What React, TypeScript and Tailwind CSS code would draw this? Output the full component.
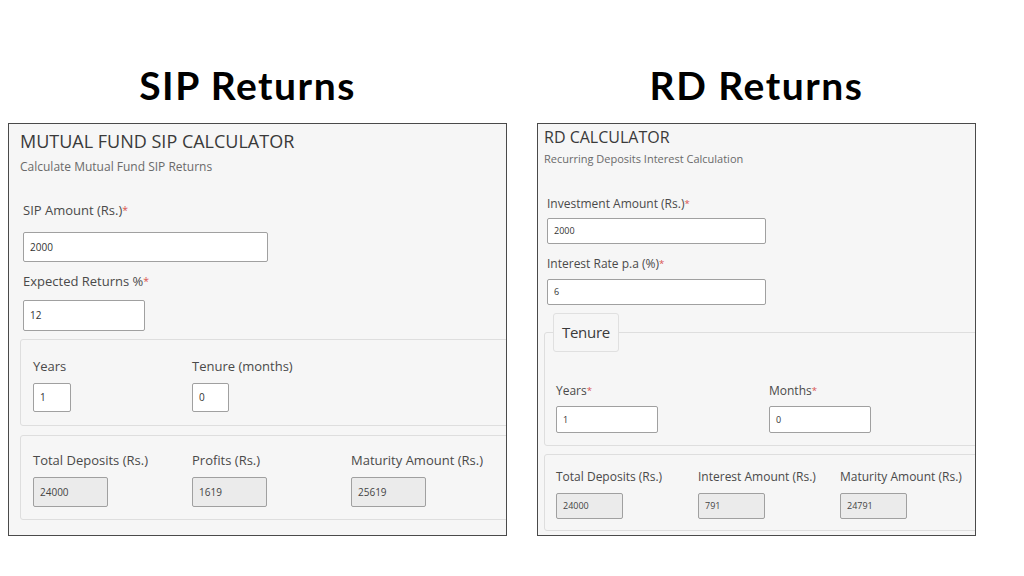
import React from 'react';

const sans = "font-['Open_Sans','Liberation_Sans',sans-serif]";

const Req = () => <span className="text-[#d9534f] text-[0.8em] align-top">*</span>;

const Field = ({ value, className }: { value: string; className: string }) => (
  <div className={`flex items-center bg-white border border-[#a0a0a0] rounded-[2px] text-[#333] ${className}`}>
    {value}
  </div>
);

const ReadOnly = ({ value, className }: { value: string; className: string }) => (
  <div className={`flex items-center bg-[#ebebeb] border border-[#a0a0a0] rounded-[2px] text-[#444] ${className}`}>
    {value}
  </div>
);

const SipCalculator = () => (
  <div className={`w-[499px] h-[413px] border border-[#4a4a4a] bg-[#f6f6f6] overflow-hidden ${sans}`}>
    <div className="pl-[11px] pt-[5px]">
      <h2 className="text-[18px] leading-[24px] text-[#3a3a3a]">MUTUAL FUND SIP CALCULATOR</h2>
      <p className="mt-[6px] text-[12px] leading-[16px] text-[#6a6a6a]">Calculate Mutual Fund SIP Returns</p>
    </div>
    <div className="pl-[14px]">
      <label className="block mt-[26px] text-[13px] leading-[18px] text-[#4a4a4a]">SIP Amount (Rs.)<Req /></label>
      <Field value="2000" className="mt-[13px] w-[245px] h-[30px] px-[6px] text-[10px]" />
      <label className="block mt-[10px] text-[13px] leading-[18px] text-[#4a4a4a]">Expected Returns %<Req /></label>
      <Field value="12" className="mt-[10px] w-[122px] h-[31px] px-[6px] text-[10px]" />
    </div>
    <div className="ml-[11px] mr-[-12px] mt-[8px] border border-[#dedede] rounded-[3px] pl-[12px] pt-[17px] pb-[13px] grid grid-cols-[159px_159px_1fr]">
      <div>
        <div className="text-[13px] leading-[18px] text-[#4a4a4a]">Years</div>
        <Field value="1" className="mt-[8px] w-[38px] h-[29px] px-[6px] text-[10px]" />
      </div>
      <div>
        <div className="text-[13px] leading-[18px] text-[#4a4a4a]">Tenure (months)</div>
        <Field value="0" className="mt-[8px] w-[37px] h-[29px] px-[6px] text-[10px]" />
      </div>
    </div>
    <div className="ml-[11px] mr-[-12px] mt-[9px] border border-[#dedede] rounded-[3px] pl-[12px] pt-[15px] pb-[12px] grid grid-cols-[159px_159px_1fr]">
      {[
        ['Total Deposits (Rs.)', '24000'],
        ['Profits (Rs.)', '1619'],
        ['Maturity Amount (Rs.)', '25619'],
      ].map(([label, value]) => (
        <div key={label}>
          <div className="text-[13px] leading-[18px] text-[#4a4a4a] whitespace-nowrap">{label}</div>
          <ReadOnly value={value} className="mt-[8px] w-[75px] h-[30px] px-[6px] text-[10px]" />
        </div>
      ))}
    </div>
  </div>
);

const RdCalculator = () => (
  <div className={`w-[439px] h-[413px] border border-[#4a4a4a] bg-[#f6f6f6] overflow-hidden ${sans}`}>
    <div className="pl-[6px] pt-[2px]">
      <h2 className="text-[16px] leading-[22px] text-[#3a3a3a]">RD CALCULATOR</h2>
      <p className="mt-[4px] text-[11px] leading-[14px] text-[#6a6a6a]">Recurring Deposits Interest Calculation</p>
    </div>
    <div className="pl-[9px]">
      <label className="block mt-[30px] text-[12px] leading-[16px] text-[#4a4a4a]">Investment Amount (Rs.)<Req /></label>
      <Field value="2000" className="mt-[6px] w-[219px] h-[26px] px-[6px] text-[9px]" />
      <label className="block mt-[12px] text-[12px] leading-[16px] text-[#4a4a4a]">Interest Rate p.a (%)<Req /></label>
      <Field value="6" className="mt-[7px] w-[219px] h-[26px] px-[6px] text-[9px]" />
    </div>
    <fieldset className="ml-[6px] mr-[-12px] mt-[8px] border border-[#dedede] rounded-[3px] px-[8px] pb-[12px]">
      <legend className="border border-[#e0e0e0] rounded-[3px] bg-[#f6f6f6] px-[8px] py-[8px] text-[15px] leading-[21px] tracking-[-0.3px] text-[#3a3a3a]">
        Tenure
      </legend>
      <div className="pl-[3px] pt-[31px] grid grid-cols-[213px_1fr]">
        <div>
          <div className="text-[12px] leading-[16px] text-[#4a4a4a]">Years<Req /></div>
          <Field value="1" className="mt-[7px] w-[102px] h-[27px] px-[6px] text-[9px]" />
        </div>
        <div>
          <div className="text-[12px] leading-[16px] text-[#4a4a4a]">Months<Req /></div>
          <Field value="0" className="mt-[7px] w-[102px] h-[27px] px-[6px] text-[9px]" />
        </div>
      </div>
    </fieldset>
    <div className="ml-[6px] mr-[-12px] mt-[8px] border border-[#dedede] rounded-[3px] pl-[11px] pt-[14px] pb-[11px] grid grid-cols-[142px_142px_1fr]">
      {[
        ['Total Deposits (Rs.)', '24000'],
        ['Interest Amount (Rs.)', '791'],
        ['Maturity Amount (Rs.)', '24791'],
      ].map(([label, value]) => (
        <div key={label}>
          <div className="text-[12px] leading-[16px] text-[#4a4a4a] whitespace-nowrap">{label}</div>
          <ReadOnly value={value} className="mt-[8px] w-[67px] h-[26px] px-[6px] text-[9px]" />
        </div>
      ))}
    </div>
  </div>
);

export default function App() {
  return (
    <div className="w-[1024px] h-[576px] bg-white overflow-hidden">
      <div className="flex pl-[8px] pt-[66px] gap-[30px]">
        <div className="flex flex-col">
          <h1 className="text-center pr-[20px] text-[39px] leading-[39px] tracking-[1.5px] font-bold text-black font-['Lato','Liberation_Sans',sans-serif]">SIP Returns</h1>
          <div className="mt-[18px]">
            <SipCalculator />
          </div>
        </div>
        <div className="flex flex-col">
          <h1 className="text-center text-[39px] leading-[39px] tracking-[1.5px] font-bold text-black font-['Lato','Liberation_Sans',sans-serif]">RD Returns</h1>
          <div className="mt-[18px]">
            <RdCalculator />
          </div>
        </div>
      </div>
    </div>
  );
}
